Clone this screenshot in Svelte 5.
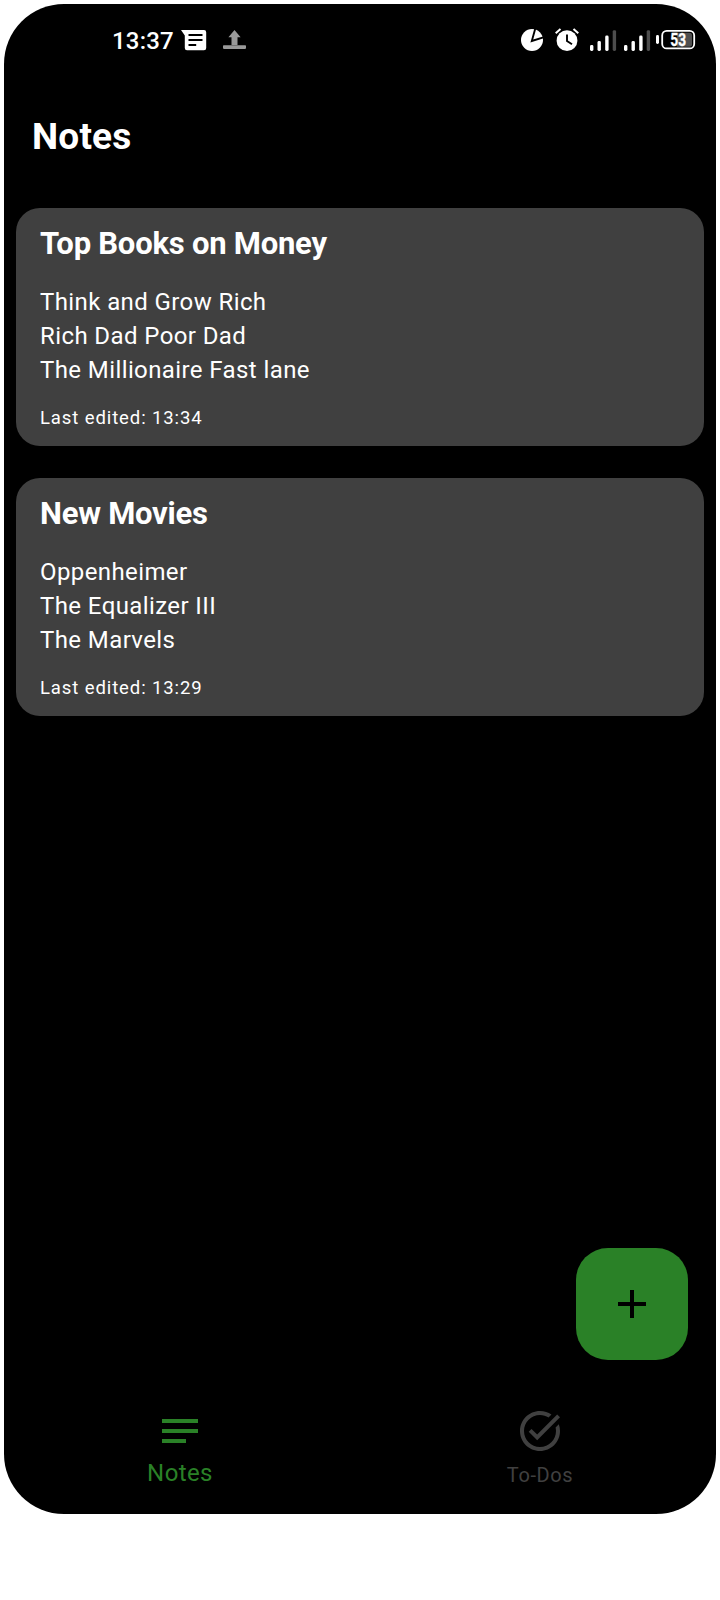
<script>
  const notes = [
    {
      title: 'Top Books on Money',
      lines: ['Think and Grow Rich', 'Rich Dad Poor Dad', 'The Millionaire Fast lane'],
      edited: '13:34',
    },
    {
      title: 'New Movies',
      lines: ['Oppenheimer', 'The Equalizer III', 'The Marvels'],
      edited: '13:29',
    },
  ];
</script>

<div class="phone">
  <header class="status">
    <div class="status-left">
      <span class="clock">13:37</span>
      <svg class="message" width="26" height="22" viewBox="0 0 26 22">
        <path fill="#fff" d="M0 0H23a2.2 2.2 0 0 1 2.2 2.2V18a2.2 2.2 0 0 1-2.2 2.2H6A2.2 2.2 0 0 1 3.800 18V5.500z" />
        <path stroke="#000" stroke-width="2" d="M7.500 5H21.500M7.500 10H21.500M7.500 15H15.200" />
      </svg>
      <svg class="upload" width="24" height="20" viewBox="0 0 24 20">
        <path fill="#999" d="M11.500 0L17.600 7.200H14.500V15H8.500V7.200H5.400z" />
        <rect y="15.300" width="23" height="3.600" rx="0.800" fill="#999" />
      </svg>
    </div>
    <div class="status-right">
      <svg width="200" height="28" viewBox="0 0 200 28">
        <circle cx="12" cy="14" r="11" fill="#fff" />
        <path d="M16 0L11.800 15L25 10.800" fill="none" stroke="#000" stroke-width="1.900" />
        <g fill="none" stroke="#fff" stroke-width="2">
          <path d="M35.700 7.200L40.500 3M53.500 3L58.300 7.200" />
        </g>
        <circle cx="47" cy="14.700" r="10.400" fill="#fff" />
        <path d="M47 8.500V15L52 18.200" fill="none" stroke="#000" stroke-width="1.900" />
        {#each [70, 104] as x}
          <rect {x} y="19" width="3.400" height="6" rx="1.400" fill="#fff" />
          <rect x={x + 7.5} y="15" width="3.400" height="10" rx="1.400" fill="#fff" />
          <rect x={x + 15.2} y="9.500" width="3.400" height="15.500" rx="1.400" fill="#fff" />
          <rect x={x + 22.7} y="4.200" width="3.400" height="20.800" rx="1.400" fill="#4d4d4d" />
        {/each}
        <rect x="136" y="9" width="3" height="9" rx="1.400" fill="#fff" />
        <rect x="142.200" y="4.900" width="32" height="17.500" rx="4.500" fill="none" stroke="#fff" stroke-width="1.800" />
        <path fill="#505050" d="M157 6.700H169.500a2.500 2.500 0 0 1 2.500 2.500V18.200a2.500 2.500 0 0 1-2.500 2.500H157z" />
        <text x="158.200" y="19.500" text-anchor="middle" textLength="15.800" lengthAdjust="spacingAndGlyphs" class="percent">53</text>
      </svg>
    </div>
  </header>

  <h1>Notes</h1>

  <main>
    {#each notes as note}
      <article class="card">
        <h2>{note.title}</h2>
        <div class="body">
          {#each note.lines as line}
            <p>{line}</p>
          {/each}
        </div>
        <p class="edited">Last edited: {note.edited}</p>
      </article>
    {/each}
  </main>

  <div class="actions">
    <button class="fab" aria-label="Add note">
      <svg width="28" height="28" viewBox="0 0 28 28">
        <path fill="#000" d="M12 0h4v12h12v4H16v12h-4V16H0v-4h12z" />
      </svg>
    </button>
  </div>

  <nav>
    <div class="tab active">
      <svg width="36" height="24" viewBox="0 0 36 24">
        <path fill="currentColor" d="M0 0h36v4H0zM0 10h36v4H0zM0 20h24v4H0z" />
      </svg>
      <span>Notes</span>
    </div>
    <div class="tab idle">
      <svg width="48" height="48" viewBox="0 0 24 24">
        <path fill="currentColor" d="M22 5.180L10.590 16.600l-4.240-4.240 1.410-1.410 2.830 2.830 10-10L22 5.180zM19.790 10.220C19.920 10.790 20 11.390 20 12c0 4.420-3.580 8-8 8s-8-3.580-8-8 3.580-8 8-8c1.580 0 3.040.46 4.280 1.250l1.440-1.440C16.100 2.670 14.130 2 12 2 6.480 2 2 6.480 2 12s4.480 10 10 10 10-4.480 10-10c0-1.190-.22-2.330-.6-3.390l-1.610 1.610z" />
      </svg>
      <span>To-Dos</span>
    </div>
  </nav>
</div>

<style>
  :global(body) {
    margin: 0;
    background: #fff;
  }

  .phone {
    box-sizing: border-box;
    width: 712px;
    height: 1510px;
    margin: 4px;
    border-radius: 60px;
    background: #000;
    color: #fff;
    font-family: Roboto, sans-serif;
    display: flex;
    flex-direction: column;
  }

  .status {
    height: 72px;
    padding: 0 0 0 108px;
    display: flex;
    justify-content: space-between;
    align-items: center;
  }

  .status-left,
  .status-right {
    display: flex;
    align-items: center;
  }

  .clock {
    margin-top: 2px;
    font-size: 24px;
    line-height: 28px;
    font-weight: 500;
    letter-spacing: 0.2px;
    width: 69px;
  }

  .message {
    margin-top: 1px;
  }

  .upload {
    margin: -1px 0 0 16px;
  }

  .percent {
    font: 700 17.5px Roboto, sans-serif;
    fill: #fff;
    stroke: #fff;
    stroke-width: 0.3px;
  }

  .status-right {
    margin-right: -4px;
  }

  h1 {
    margin: 40px 0 0 28px;
    font-size: 37px;
    line-height: 42px;
    font-weight: 700;
    letter-spacing: 0.2px;
  }

  main {
    margin-top: 50px;
    padding: 0 12px;
    display: flex;
    flex-direction: column;
    gap: 32px;
  }

  .card {
    box-sizing: border-box;
    height: 238px;
    padding: 17px 24px 16px;
    border-radius: 24px;
    background: #404040;
  }

  h2 {
    margin: 0;
    font-size: 31px;
    line-height: 38px;
    font-weight: 700;
    letter-spacing: -0.23px;
  }

  p {
    margin: 0;
  }

  .body {
    margin-top: 22px;
    font-size: 24px;
    line-height: 34px;
    letter-spacing: 0.4px;
  }

  .edited {
    margin-top: 19px;
    font-size: 18.5px;
    line-height: 24px;
    letter-spacing: 0.9px;
  }

  .actions {
    margin-top: auto;
    padding-right: 28px;
    display: flex;
    justify-content: flex-end;
  }

  .fab {
    width: 112px;
    height: 112px;
    padding: 0;
    border: 0;
    border-radius: 32px;
    background: #2a8127;
    display: grid;
    place-items: center;
  }

  nav {
    height: 154px;
    display: flex;
    gap: 8px;
  }

  .tab {
    flex: 1 1 0;
    display: flex;
    flex-direction: column;
    align-items: center;
  }

  .active {
    padding-top: 59px;
    color: #2a8127;
    font-size: 24px;
    line-height: 28px;
    letter-spacing: 0.4px;
  }

  .active span {
    margin-top: 16px;
  }

  .idle {
    padding-top: 47px;
    color: #404040;
    font-size: 20px;
    line-height: 26px;
    letter-spacing: 0.6px;
  }

  .idle span {
    margin-top: 7px;
  }
</style>
